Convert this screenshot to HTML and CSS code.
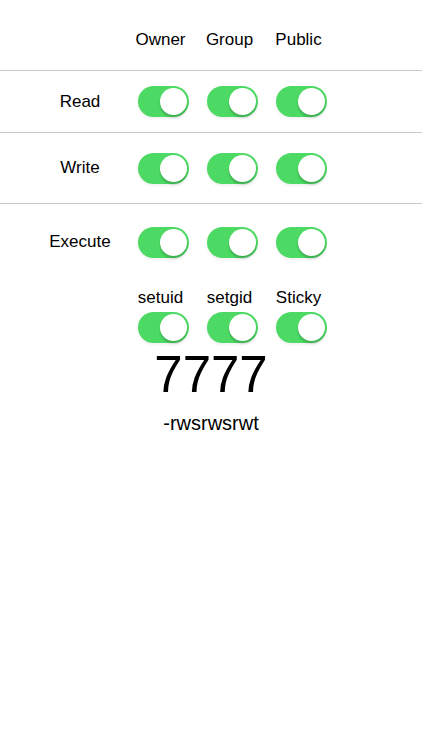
FILE: index.html
```html
<!DOCTYPE html>
<html lang="en">

<head>
    <meta charset="UTF-8">
    <meta name="viewport" content="width=device-width, initial-scale=1.0">
    <title>Permissions</title>
    <link rel="stylesheet" href="styles.css">
</head>

<body>
    <div class="row header">
        <div class="label"></div>
        <div class="cols names">
            <span class="name">Owner</span>
            <span class="name">Group</span>
            <span class="name">Public</span>
        </div>
    </div>

    <div class="row read">
        <div class="label">Read</div>
        <div class="cols">
            <span class="switch on"><span class="knob"></span></span>
            <span class="switch on"><span class="knob"></span></span>
            <span class="switch on"><span class="knob"></span></span>
        </div>
    </div>

    <div class="row write">
        <div class="label">Write</div>
        <div class="cols">
            <span class="switch on"><span class="knob"></span></span>
            <span class="switch on"><span class="knob"></span></span>
            <span class="switch on"><span class="knob"></span></span>
        </div>
    </div>

    <div class="row execute">
        <div class="label">Execute</div>
        <div class="cols">
            <span class="switch on"><span class="knob"></span></span>
            <span class="switch on"><span class="knob"></span></span>
            <span class="switch on"><span class="knob"></span></span>
        </div>
    </div>

    <div class="special">
        <div class="row special-names">
            <div class="label"></div>
            <div class="cols names">
                <span class="name">setuid</span>
                <span class="name">setgid</span>
                <span class="name">Sticky</span>
            </div>
        </div>
        <div class="row">
            <div class="label"></div>
            <div class="cols">
                <span class="switch on"><span class="knob"></span></span>
                <span class="switch on"><span class="knob"></span></span>
                <span class="switch on"><span class="knob"></span></span>
            </div>
        </div>
    </div>

    <div class="octal">7777</div>
    <div class="symbolic">-rwsrwsrwt</div>
</body>

</html>
```

FILE: styles.css
```css
body {
    font-family: "Liberation Sans", Arial, sans-serif;
    font-size: 17px;
    color: #000;
    background-color: #fff;
    margin: 0;
}

.row {
    display: flex;
    align-items: center;
    box-sizing: border-box;
}

.label {
    width: 100px;
    margin-left: 30px;
    margin-right: 8px;
    text-align: center;
}

.cols {
    display: flex;
    gap: 18px;
}

.names {
    margin-left: -3px;
}

.name {
    width: 51px;
    display: flex;
    justify-content: center;
    white-space: nowrap;
    line-height: 20px;
}

.header {
    height: 71px;
    padding-top: 10px;
    border-bottom: 1px solid #c8c7cc;
}

.read {
    height: 62px;
    border-bottom: 1px solid #c8c7cc;
}

.write {
    height: 71px;
    border-bottom: 1px solid #c8c7cc;
}

.execute {
    height: 76px;
}

.special-names {
    padding-top: 8px;
    margin-bottom: 4px;
}

.switch {
    width: 51px;
    height: 31px;
    border-radius: 16px;
    background-color: #e5e5ea;
    position: relative;
    box-shadow: 0 2px 3px rgba(0, 0, 0, 0.06);
}

.switch.on {
    background-color: #4cd964;
}

.knob {
    position: absolute;
    top: 2px;
    left: 2px;
    width: 27px;
    height: 27px;
    border-radius: 50%;
    background-color: #fff;
    box-shadow: 0 3px 1px rgba(0, 0, 0, 0.05), 0 2px 2px rgba(0, 0, 0, 0.1), 0 3px 3px rgba(0, 0, 0, 0.05);
}

.switch.on .knob {
    left: 22px;
}

.octal {
    text-align: center;
    font-size: 51px;
    line-height: 60px;
    margin-top: 2px;
}

.symbolic {
    text-align: center;
    font-size: 20px;
    line-height: 24px;
    margin-top: 6px;
}
```
